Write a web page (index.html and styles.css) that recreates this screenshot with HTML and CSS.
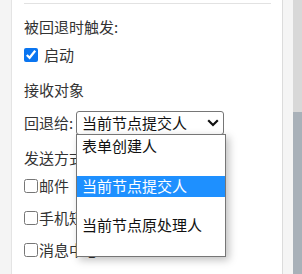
FILE: index.html
```html
<!DOCTYPE html>
<html lang="zh">
<head>
<meta charset="utf-8">
<link rel="stylesheet" href="styles.css">
</head>
<body>
<div class="frame">
  <div class="left-strip"></div>
  <div class="content">
    <div class="rule"></div>
    <div class="row label-row first">被回退时触发:</div>
    <label class="row check-row checked-row"><input type="checkbox" class="cb cb-gap" checked><span>启动</span></label>
    <div class="row label-row r3">接收对象</div>
    <div class="row label-row r4">
      <span class="field-label">回退给:</span>
      <div class="select-wrap">
        <div class="select">
          <span>当前节点提交人</span>
          <svg class="chev" width="12" height="8" viewBox="0 0 12 8"><path d="M1.2 1.3 L6 6 L10.8 1.3" fill="none" stroke="#111" stroke-width="2.2" stroke-linejoin="miter"/></svg>
        </div>
        <div class="popup">
          <div class="opt">表单创建人</div>
          <div class="opt active">当前节点提交人</div>
          <div class="opt">当前节点原处理人</div>
        </div>
      </div>
    </div>
    <div class="row label-row r5">发送方式</div>
    <label class="row check-row r6"><input type="checkbox" class="cb"><span>邮件</span></label>
    <label class="row check-row r7"><input type="checkbox" class="cb"><span>手机短信</span></label>
    <label class="row check-row r8"><input type="checkbox" class="cb"><span>消息中心</span></label>
  </div>
  <div class="right-strip"></div>
  <div class="scrollbar"><div class="thumb"></div></div>
</div>
</body>
</html>
```

FILE: styles.css
```css
html, body {
  margin: 0;
  padding: 0;
  width: 302px;
  height: 274px;
  overflow: hidden;
  background: #fff;
}
body {
  font-family: "Noto Sans CJK SC", "Noto Sans", sans-serif;
  font-size: 15px;
  color: #333;
}
.frame {
  display: flex;
  height: 274px;
}
.left-strip {
  width: 11px;
  background: #f4f4f4;
  border-right: 1px solid #e4e4e4;
  flex: none;
}
.content {
  width: 270px;
  flex: none;
  padding: 3px 11px 0 12px;
  box-sizing: border-box;
  background: #fff;
}
.rule {
  height: 1px;
  background: #e2e2e2;
}
.right-strip {
  width: 10px;
  flex: none;
  background: #f5f5f5;
  border-left: 1px solid #dcdcdc;
}
.scrollbar {
  width: 9px;
  flex: none;
  background: #d8d8d8;
  position: relative;
}
.thumb {
  position: absolute;
  left: 0;
  right: 0;
  top: 112px;
  bottom: 0;
  background: #a9b1b9;
}
.row {
  display: flex;
  align-items: center;
  height: 24px;
  line-height: 24px;
  white-space: nowrap;
}
.first { margin-top: 11px; }
.checked-row { margin-top: 3.5px; }
.r3 { margin-top: 11.5px; }
.r4 { margin-top: 9px; }
.r5 { margin-top: 11px; }
.r6 { margin-top: 3.5px; }
.r7 { margin-top: 8px; }
.r8 { margin-top: 8.5px; }
.cb {
  margin: 0;
  width: 14px;
  height: 14px;
  accent-color: #0a75f0;
}
.cb-gap { margin-right: 6px; }
.cb + span { margin-left: 1px; }
.checked-row .cb + span { margin-left: 0; }
.field-label { width: 52px; flex: none; }
.select-wrap {
  position: relative;
  width: 148px;
  height: 24px;
}
.select {
  box-sizing: border-box;
  height: 24px;
  border: 1px solid #767676;
  border-radius: 3px;
  padding: 0 0 0 5px;
  display: flex;
  align-items: center;
  justify-content: space-between;
  line-height: 22px;
  color: #111;
}
.chev {
  margin-right: 4px;
}
.popup {
  position: absolute;
  left: 0;
  top: 23px;
  width: 150px;
  height: 123px;
  box-sizing: border-box;
  border: 1px solid #767676;
  background: #fff;
  padding-top: 1px;
  box-shadow: 3px 3px 8px rgba(0,0,0,0.25);
  z-index: 5;
}
.opt {
  height: 21px;
  line-height: 20px;
  padding-left: 5px;
  margin-bottom: 18.5px;
  color: #111;
}
.opt.active {
  background: #1e90ff;
  color: #fff;
}
```
